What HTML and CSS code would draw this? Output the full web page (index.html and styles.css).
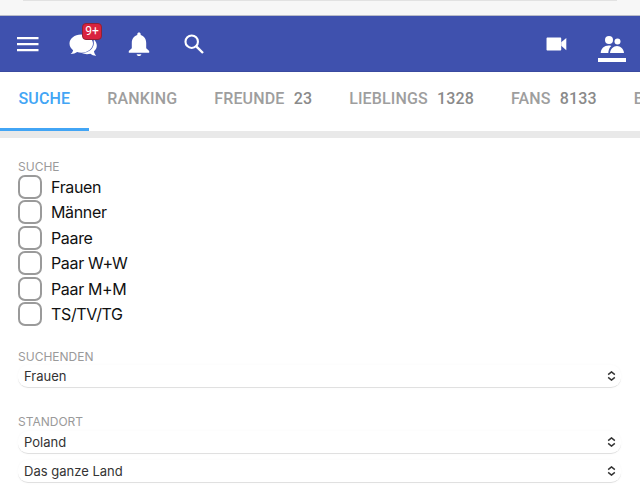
FILE: index.html
```html
<!DOCTYPE html>
<html lang="de">
<head>
    <meta charset="UTF-8">
    <meta name="viewport" content="width=device-width, initial-scale=1.0">
    <title>Suche</title>
    <link rel="stylesheet" href="styles.css">
</head>
<body>
    <div class="top-strip"><div class="top-strip-bar"></div></div>

    <header class="navbar">
        <div class="nav-group">
            <button class="nav-btn nav-menu">
                <svg width="24" height="24" viewBox="0 0 24 24"><path d="M1 5h21.500v2.200H1zM1 11h21.500v2.200H1zM1 17h21.500v2.200H1z" fill="#fff"/></svg>
            </button>
            <button class="nav-btn nav-chat">
                <svg width="32" height="28" viewBox="0 0 32 28"><path d="M13 4.500C6.600 4.500 1.500 8.600 1.500 13.600c0 2.600 1.400 5 3.600 6.600-.3 1.500-1.200 2.900-2.500 3.900 2.400.1 4.800-.7 6.500-2 1.300.4 2.800.6 4.400.6 6.400 0 11.500-4.100 11.500-9.100S19.400 4.500 13 4.500z" fill="#fff"/><path d="M25.800 9.500c1.900 1.600 3 3.800 3 6.100 0 2.300-1 4.300-2.800 5.700.2 1.700 1 3.300 2.200 4.400-2.200.1-4.300-.6-5.800-1.900-1.100.3-2.200.4-3.400.4-1.900 0-3.700-.4-5.200-1.100 6.500-.2 12-4.200 12-9.800 0-1.300-.2-2.800 0-3.800z" fill="#fff"/></svg>
                <span class="badge">9+</span>
            </button>
            <button class="nav-btn nav-bell">
                <svg width="24" height="26" viewBox="0 0 24 26"><path d="M12 1.500c-1 0-1.700.7-1.700 1.700v.8C6.700 5 4.800 8.200 4.800 12v5.200L1.800 20v1.800h20.400V20l-3-2.800V12c0-3.800-1.900-7-5.500-8v-.8c0-1-.7-1.700-1.700-1.700z" fill="#fff"/><path d="M9.700 23.200h4.600c0 1-1 1.800-2.300 1.800s-2.300-.8-2.300-1.800z" fill="#fff"/></svg>
            </button>
            <button class="nav-btn nav-search">
                <svg width="22" height="22" viewBox="0 0 24 24"><circle cx="9.500" cy="9.500" r="6.800" fill="none" stroke="#fff" stroke-width="2.300"/><path d="M14.500 14.500l7.300 7.300" stroke="#fff" stroke-width="2.600" fill="none"/></svg>
            </button>
        </div>
        <div class="nav-group">
            <button class="nav-btn nav-video">
                <svg width="21" height="16" viewBox="0 0 24 18"><path d="M1.800 1.500h14.400c.7 0 1.200.5 1.200 1.200v12.600c0 .7-.5 1.200-1.200 1.200H1.800c-.7 0-1.200-.5-1.200-1.200V2.700c0-.7.500-1.200 1.200-1.200z" fill="#fff"/><path d="M17.400 7l5.800-5v14l-5.800-5z" fill="#fff"/></svg>
            </button>
            <button class="nav-btn nav-people">
                <svg width="28" height="26" viewBox="0 0 28 26"><circle cx="11" cy="4" r="4" fill="#fff"/><circle cx="19.500" cy="5.500" r="3" fill="#fff"/><path d="M2.700 17c.2-4.500 3.500-7.500 8-7.500 1 0 1.800.1 2.600.4-1.800 1.500-2.900 4-3 7.100z" fill="#fff"/><path d="M12 17c.3-3.900 3.500-7 7-7s6.700 3.100 7 7z" fill="#fff"/><path d="M0 22h28v4H0z" fill="#fff"/></svg>
            </button>
        </div>
    </header>

    <nav class="tabs">
        <a class="tab tab-active">Suche</a>
        <a class="tab">Ranking</a>
        <a class="tab">Freunde <span class="tab-count">23</span></a>
        <a class="tab">Lieblings <span class="tab-count">1328</span></a>
        <a class="tab">Fans <span class="tab-count">8133</span></a>
        <a class="tab">Blockiert</a>
    </nav>
    <div class="tabs-shadow"></div>

    <main class="content">
        <section class="group">
            <div class="group-label">Suche</div>
            <label class="check-row"><span class="check-box"></span>Frauen</label>
            <label class="check-row"><span class="check-box"></span>Männer</label>
            <label class="check-row"><span class="check-box"></span>Paare</label>
            <label class="check-row"><span class="check-box"></span>Paar W+W</label>
            <label class="check-row"><span class="check-box"></span>Paar M+M</label>
            <label class="check-row"><span class="check-box"></span>TS/TV/TG</label>
        </section>

        <section class="group group-seeking">
            <div class="group-label">Suchenden</div>
            <div class="select-box">
                <span>Frauen</span>
                <svg class="select-arrows" width="9" height="10" viewBox="0 0 10 12"><path d="M1 4.300L5 1l4 3.300M1 7.700L5 11l4-3.300" fill="none" stroke="#333" stroke-width="1.700"/></svg>
            </div>
        </section>

        <section class="group group-location">
            <div class="group-label">Standort</div>
            <div class="select-box">
                <span>Poland</span>
                <svg class="select-arrows" width="9" height="10" viewBox="0 0 10 12"><path d="M1 4.300L5 1l4 3.300M1 7.700L5 11l4-3.300" fill="none" stroke="#333" stroke-width="1.700"/></svg>
            </div>
            <div class="select-box select-second">
                <span>Das ganze Land</span>
                <svg class="select-arrows" width="9" height="10" viewBox="0 0 10 12"><path d="M1 4.300L5 1l4 3.300M1 7.700L5 11l4-3.300" fill="none" stroke="#333" stroke-width="1.700"/></svg>
            </div>
        </section>
    </main>
</body>
</html>
```

FILE: styles.css
```css
html, body {
    margin: 0;
    padding: 0;
    height: 502px;
    overflow: hidden;
    background-color: #fff;
    font-family: 'Inter', 'Liberation Sans', sans-serif;
}

.top-strip {
    height: 15px;
    background-color: #f7f7f7;
    border-bottom: 1px solid #b9bcc9;
}

.top-strip-bar {
    margin: 0 23px;
    height: 0;
    border-bottom: 1px solid #e2e2e2;
}

.navbar {
    display: flex;
    justify-content: space-between;
    align-items: center;
    height: 55px;
    padding: 0 14px 0 16px;
    background-color: #3f51ae;
    border-bottom: 1px solid #3a4aa0;
}

.nav-group {
    display: flex;
    align-items: center;
}

.nav-btn {
    position: relative;
    display: flex;
    align-items: center;
    justify-content: center;
    padding: 0;
    background: none;
    border: none;
}

.nav-menu {
    margin-right: 28px;
}

.nav-chat {
    margin-right: 27px;
}

.nav-bell {
    margin-right: 32px;
}

.nav-video {
    margin-right: 31px;
}

.nav-people {
    margin-top: 11px;
}

.badge {
    position: absolute;
    top: -7px;
    right: -2px;
    width: 18px;
    height: 15px;
    line-height: 15px;
    text-align: center;
    font-family: 'Roboto', sans-serif;
    font-size: 12px;
    color: #fff;
    background-color: #d9233f;
    border: 1px solid #8e2236;
    border-radius: 4px;
}

.tabs {
    display: flex;
    height: 59px;
    overflow: hidden;
    background-color: #fff;
    font-family: 'Roboto', sans-serif;
    font-size: 16px;
    font-weight: 500;
    letter-spacing: 0.15px;
    text-transform: uppercase;
    color: #9e9e9e;
}

.tab {
    flex: none;
    box-sizing: border-box;
    height: 59px;
    padding: 17px 18.500px 0;
    white-space: nowrap;
}

.tab-count {
    margin-left: 5px;
    color: #8a8a8a;
}

.tab-active {
    color: #42a5f5;
    border-bottom: 3px solid #42a5f5;
}

.tabs-shadow {
    height: 7px;
    background-color: #e9e9e9;
}

.content {
    padding: 21px 19px 0 18px;
}

.group-label {
    font-size: 12px;
    line-height: 15px;
    text-transform: uppercase;
    color: #9a9a9a;
}

.check-row {
    display: flex;
    align-items: center;
    height: 25.500px;
    font-size: 16px;
    letter-spacing: -0.35px;
    color: #111;
}

.check-box {
    box-sizing: border-box;
    width: 24px;
    height: 24px;
    margin-right: 9px;
    border: 2px solid #9a9a9a;
    border-radius: 7px;
}

.group-seeking {
    margin-top: 22px;
}

.group-location {
    margin-top: 26px;
}

.select-box {
    display: flex;
    justify-content: space-between;
    align-items: center;
    box-sizing: border-box;
    height: 23px;
    margin-top: 1px;
    padding: 0 5px 0 6px;
    font-size: 13px;
    color: #333;
    background-color: #fff;
    border-bottom: 1px solid #e0e0e0;
    border-radius: 10px;
    box-shadow: 0 0 3px rgba(0, 0, 0, 0.03);
}

.group-location .select-box {
    margin-top: 2px;
}

.group-location .select-second {
    margin-top: 6px;
}
```
